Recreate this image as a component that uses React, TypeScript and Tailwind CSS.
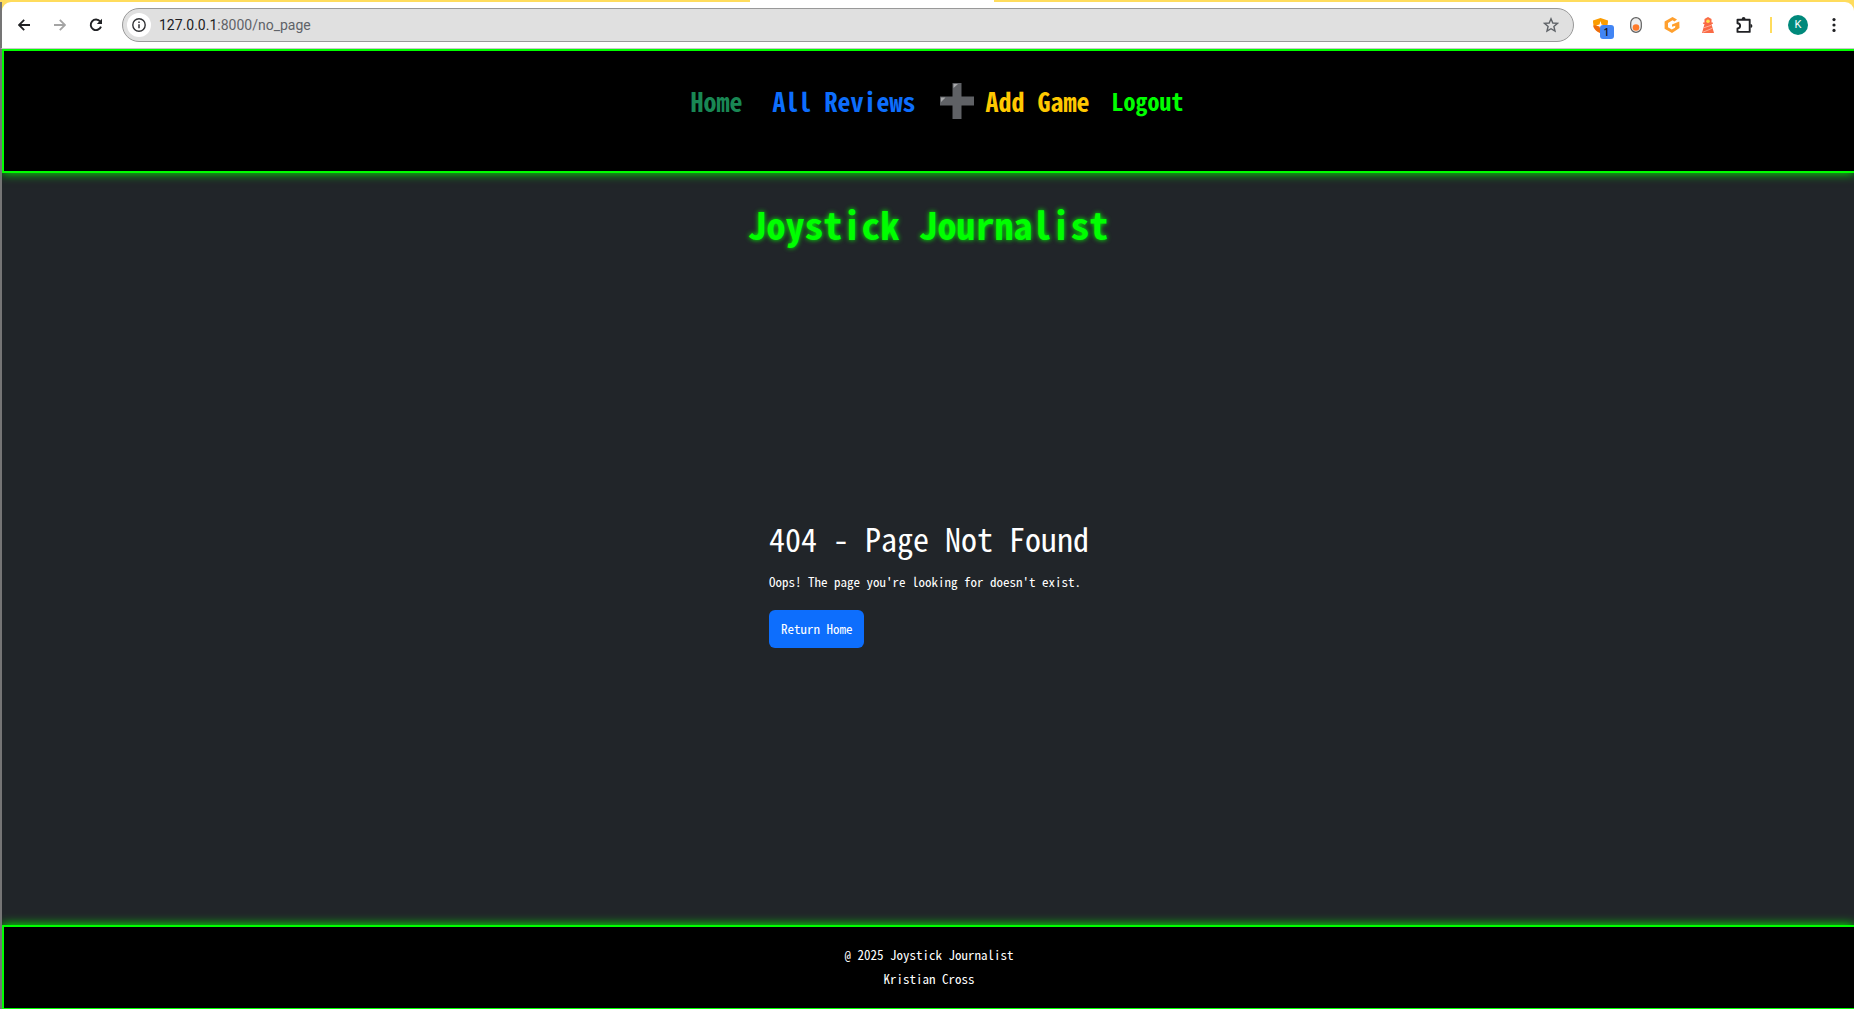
import type { ReactNode } from "react";

const pixel = "font-['Noto_Sans_Mono_CJK_SC','Liberation_Mono',monospace]";

function IconButton({ label, children }: { label: string; children: ReactNode }) {
  return (
    <button type="button" aria-label={label} className="flex h-9 w-9 shrink-0 items-center justify-center">
      {children}
    </button>
  );
}

function BrowserBar() {
  return (
    <div className="shrink-0 bg-[#ffdc5c]">
      <div className="mx-auto h-[2px] w-[244px] translate-x-[-55px] bg-white" />
      <div className="flex h-[46px] border-l-2 border-[#757575]">
        <div className="flex min-w-0 flex-1 items-center rounded-t-[9px] bg-white pr-[2px] pl-1">
          <IconButton label="Back">
            <svg width="12" height="12" viewBox="0 0 12 12" fill="none" stroke="#202124" strokeWidth="1.8">
              <path d="M12 6H1.2M6.2 .8 1 6l5.200 5.200" />
            </svg>
          </IconButton>
          <IconButton label="Forward">
            <svg width="12" height="12" viewBox="0 0 12 12" fill="none" stroke="#a4a4a4" strokeWidth="1.8">
              <path d="M0 6h10.800M5.800 .8 11 6l-5.200 5.200" />
            </svg>
          </IconButton>
          <IconButton label="Reload">
            <svg width="14" height="14" viewBox="0 0 14 14" fill="none">
              <path d="M12 8.600A5.300 5.300 0 1 1 11.200 3.500" stroke="#202124" strokeWidth="1.9" />
              <path d="M13 .8V6H7.800z" fill="#202124" />
            </svg>
          </IconButton>
          <div className="ml-2 flex h-[34px] min-w-0 flex-1 items-center rounded-full border border-[#999] bg-[#e0e0e0] pr-2 pl-1">
            <button
              type="button"
              aria-label="Site information"
              className="flex h-6 w-6 shrink-0 items-center justify-center rounded-full bg-white"
            >
              <svg width="14" height="14" viewBox="0 0 14 14" fill="none" stroke="#303134">
                <circle cx="7" cy="7" r="6.200" strokeWidth="1.4" />
                <path d="M7 6.200v4M7 3.500v1.500" strokeWidth="1.5" />
              </svg>
            </button>
            <div className="relative ml-2 min-w-0 flex-1 font-[Roboto,'Noto_Sans',sans-serif] text-sm">
              <input
                aria-label="Address"
                defaultValue="127.0.0.1:8000/no_page"
                className="w-full bg-transparent text-transparent caret-black outline-none"
              />
              <div aria-hidden="true" className="pointer-events-none absolute inset-0 text-[#5f6368]">
                <span className="text-[#202124]">127.0.0.1</span>:8000/no_page
              </div>
            </div>
            <button type="button" aria-label="Bookmark this page" className="flex h-7 w-7 items-center justify-center">
              <svg width="16" height="16" viewBox="0 0 16 16" fill="none" stroke="#5f6368" strokeWidth="1.4">
                <path d="m8 1.800 1.800 4.200 4.700.4-3.600 3.100 1.100 4.600L8 11.700l-4 2.400 1.100-4.600L1.500 6.400l4.700-.4z" />
              </svg>
            </button>
          </div>
          <div className="ml-2 flex shrink-0 items-center">
            <IconButton label="Shield extension">
              <span className="relative block h-[15px] w-[15px]">
                <svg width="15" height="15" viewBox="0 0 15 15">
                  <path d="M7.500 0 15 2.600c0 6-2 10-7.500 12.400C2 12.600 0 8.600 0 2.600z" fill="#fb9c00" />
                  <path d="M0 7.500h15c-1 3.500-3 6-7.500 7.500C3 13.500 1 11 0 7.500z" fill="#ee6c0a" />
                  <path d="m7.500 3 1 3.500 3.500 1-3.500 1-1 3.500-1-3.500L3 7.500l3.500-1z" fill="#fff" />
                </svg>
                <span className="absolute top-[7px] left-[7px] flex h-[14px] w-[14px] items-center justify-center rounded-[3px] bg-[#4285f4] font-['Noto_Sans',sans-serif] text-[11px] leading-[14px] font-medium text-[#111]">
                  1
                </span>
              </span>
            </IconButton>
            <IconButton label="Toggle extension">
              <svg width="12" height="16" viewBox="0 0 12 16">
                <rect x=".7" y=".7" width="10.600" height="14.600" rx="5.300" fill="#eee" stroke="#606060" strokeWidth="1.2" />
                <circle cx="6" cy="10.500" r="3.300" fill="#ff7a29" />
              </svg>
            </IconButton>
            <IconButton label="G extension">
              <svg width="16" height="16" viewBox="0 0 16 16">
                <path
                  d="M8.500 0 13 2.500 10.500 4.500 8.500 3.300 4 6v4.300l3.800 2.300L11 10.800l.4-2L8 9.800V7.500l7.300-3L15.500 11 8 16 .6 11.800V4.500z"
                  fill="#ffa02e"
                />
              </svg>
            </IconButton>
            <IconButton label="Lighthouse">
              <svg width="12" height="16" viewBox="0 0 12 16">
                <path d="M6 0 9.500 2v3.500h1.300V7H9.500l.8 3 1.700 6H0l1.700-6 .8-3H1.200V5.500h1.300V2z" fill="#fa6a45" />
                <circle cx="6" cy="4.200" r="1.800" fill="#ffe14d" />
                <path d="m2 10.700 7.500-2.500M1 15.200l9.500-4" stroke="#ffb09a" strokeWidth="1" />
              </svg>
            </IconButton>
            <IconButton label="Extensions">
              <svg width="17" height="17" viewBox="0 0 17 17">
                <path
                  d="M1.500 2.700h12.200v12.200H1.500v-3.500a2.600 2.600 0 0 0 0-5.200z"
                  fill="none"
                  stroke="#202124"
                  strokeWidth="1.9"
                  strokeLinejoin="round"
                />
                <path d="M5.700 2a1.900 1.900 0 0 1 3.800 0zM14.500 7a1.900 1.900 0 0 1 0 3.800z" fill="#202124" />
              </svg>
            </IconButton>
            <span className="mx-2 h-4 w-[2px] bg-[#ffdc5c]" />
            <IconButton label="Profile">
              <span className="flex h-5 w-5 items-center justify-center rounded-full bg-[#00897b] font-[Roboto,sans-serif] text-[11px] text-white">
                K
              </span>
            </IconButton>
            <IconButton label="Menu">
              <svg width="4" height="14" viewBox="0 0 4 14" fill="#202124">
                <circle cx="2" cy="1.600" r="1.600" />
                <circle cx="2" cy="7" r="1.600" />
                <circle cx="2" cy="12.400" r="1.600" />
              </svg>
            </IconButton>
          </div>
        </div>
      </div>
    </div>
  );
}

function PlusIcon() {
  return (
    <svg width="34" height="36" viewBox="0 0 34 36" aria-hidden="true">
      <path d="M12.500 0h9v13.500H34v9H21.500V36h-9V22.500H0v-9h12.500z" fill="#5f6165" />
      <path d="M13.500 5V1H18zM1 19v-4.500h4.500z" fill="#a8a9ab" />
    </svg>
  );
}

export default function App() {
  return (
    <div className="flex h-screen flex-col overflow-hidden">
      <BrowserBar />
      <div
        className={`flex min-h-0 flex-1 flex-col overflow-hidden border-t border-l-2 border-t-[#c8c8c8] border-l-[#757575] bg-[#212529] text-white ${pixel}`}
      >
        <header className="border-2 border-r-0 border-[#0f0] bg-black pt-8 pb-[52px] shadow-[0_0_10px_#0f0]">
          <nav className="flex h-9 items-center justify-center pl-4 text-[26px] leading-9 font-bold">
            <a href="#home" className="text-[#198754]">Home</a>
            <a href="#reviews" className="ml-[30px] text-[#0d6efd]">All Reviews</a>
            <a href="#add" className="ml-6 flex items-center gap-3 text-[#ffc800]">
              <PlusIcon />
              Add Game
            </a>
            <a href="#logout" className="ml-[22px] text-2xl text-[#0f0]">Logout</a>
          </nav>
        </header>
        <h1 className="mt-[22px] text-center text-[38px] leading-[58px] font-bold text-[#0f0] [text-shadow:0_0_5px_#0f0]">
          Joystick Journalist
        </h1>
        <main className="flex flex-1 items-center justify-center pb-4 pl-[2px]">
          <div>
            <h2 className="text-[32px] leading-[48px]">404 - Page Not Found</h2>
            <p className="mt-2 text-[13px] leading-6">Oops! The page you're looking for doesn't exist.</p>
            <a
              href="#home"
              className="mt-4 inline-block rounded-md bg-[#0d6efd] px-3 py-[7px] text-[13px] leading-6"
            >
              Return Home
            </a>
          </div>
        </main>
        <footer className="border-2 border-r-0 border-b border-[#0f0] bg-black pt-4 pb-[17px] text-center text-[13px] leading-6 shadow-[0_0_10px_#0f0]">
          <p>@ 2025 Joystick Journalist</p>
          <p>Kristian Cross</p>
        </footer>
      </div>
    </div>
  );
}
